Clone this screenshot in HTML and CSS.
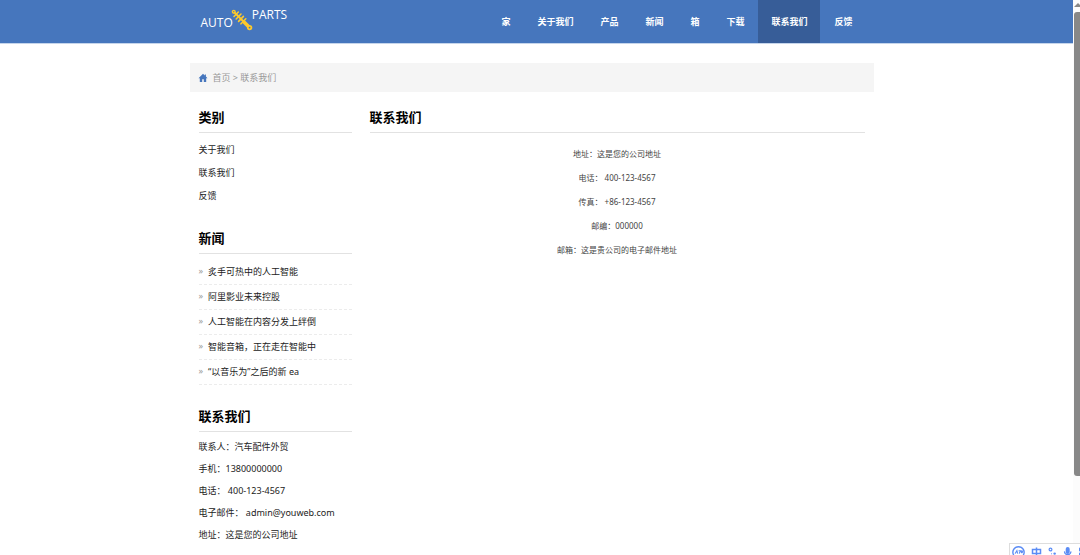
FILE: index.html
```
<!DOCTYPE html>
<html lang="zh-CN">
<head>
<meta charset="utf-8">
<meta name="viewport" content="width=device-width, initial-scale=1">
<title>联系我们</title>
<link rel="stylesheet" href="styles.css">
</head>
<body>
<div class="shell">
  <div class="page">
    <header class="header">
      <div class="container header-inner">
        <a class="logo" href="#" aria-label="AUTO PARTS">
          <span class="logo-auto">AUTO</span>
          <svg class="logo-mark" viewBox="0 0 22 22" width="22" height="22" fill="none" stroke="#fdc92b" stroke-linecap="round">
            <path d="M3.5 3.5L14 14" stroke-width="1.8"/>
            <path d="M13 13L17.5 17.5" stroke-width="3.6"/>
            <path d="M3 7.5L7.3 3M5.2 10L10 5M7.6 12.4L12.4 7.4M10 14.8L14.8 9.8" stroke-width="1.6"/>
            <circle cx="2.8" cy="2.8" r="1.4" stroke-width="1.3"/>
            <circle cx="18.6" cy="18.6" r="1.8" stroke-width="1.8" fill="#4676bd"/>
          </svg>
          <span class="logo-parts">PARTS</span>
        </a>
        <nav class="nav">
          <a href="#">家</a>
          <a href="#">关于我们</a>
          <a href="#">产品</a>
          <a href="#">新闻</a>
          <a href="#">箱</a>
          <a href="#">下载</a>
          <a class="active" href="#" aria-current="page">联系我们</a>
          <a href="#">反馈</a>
        </nav>
      </div>
    </header>

    <div class="body">
      <div class="container">
        <nav class="breadcrumb">
          <svg class="home" viewBox="0 0 10 10" width="10" height="10" fill="#4676bd"><path d="M5 .8L.5 5.2h1.3V9h2.4V6.3h1.6V9h2.4V5.2h1.3L7.9 3.6V1.4H6.8v1.1z"/></svg>
          <span><a href="#">首页</a> &gt; <a href="#">联系我们</a></span>
        </nav>

        <div class="columns">
          <aside class="sidebar">
            <section class="block">
              <h2>类别</h2>
              <ul class="categories">
                <li><a href="#">关于我们</a></li>
                <li><a href="#">联系我们</a></li>
                <li><a href="#">反馈</a></li>
              </ul>
            </section>
            <section class="block">
              <h2>新闻</h2>
              <ul class="news">
                <li><a href="#">炙手可热中的人工智能</a></li>
                <li><a href="#">阿里影业未来控股</a></li>
                <li><a href="#">人工智能在内容分发上绊倒</a></li>
                <li><a href="#">智能音箱，正在走在智能中</a></li>
                <li><a href="#">“以音乐为”之后的新 ea</a></li>
              </ul>
            </section>
            <section class="block">
              <h2>联系我们</h2>
              <div class="contact">
                <p>联系人：汽车配件外贸</p>
                <p>手机：13800000000</p>
                <p>电话： 400-123-4567</p>
                <p>电子邮件： admin@youweb.com</p>
                <p>地址：这是您的公司地址</p>
              </div>
            </section>
          </aside>

          <main class="content">
            <h2>联系我们</h2>
            <div class="details">
              <p>地址：这是您的公司地址</p>
              <p>电话： 400-123-4567</p>
              <p>传真： +86-123-4567</p>
              <p>邮编：000000</p>
              <p>邮箱：这是贵公司的电子邮件地址</p>
            </div>
          </main>
        </div>
      </div>
    </div>
  </div>

  <div class="scrollbar" aria-hidden="true">
    <svg viewBox="0 0 6 4" width="6" height="4"><path d="M0 4L4 0l2 2v2z" fill="#888"/></svg>
    <div class="thumb"></div>
  </div>
</div>

<div class="ime">
  <svg viewBox="0 0 70 11" width="70" height="11" fill="none" stroke="#5b8cf5" stroke-linecap="round">
    <path d="M3.6 11A5.6 5.6 0 1 1 13.4 11" stroke-width="1.4"/>
    <path d="M5.3 9.2l1.6-2.6.6 2.6M9 6.8h1.5L9.3 9.2M11.4 6.8v1.6q.8 1.2 1.4-1.6" stroke-width="1.1"/>
    <path d="M22.5 5.5h8v4h-8zM26.5 3.5v8" stroke-width="1.5" stroke-linecap="butt"/>
    <circle cx="40.5" cy="5.5" r="1.4" stroke-width="1.2"/>
    <path d="M44.6 9.6h.1" stroke-width="2.4"/>
    <path d="M41.5 9.8h.1" stroke-width="1"/>
    <path d="M57.7 5v3" stroke-width="4"/>
    <path d="M54.5 8q.3 2.6 3.2 2.6 2.9 0 3.2-2.6" stroke-width="1.3"/>
    <path d="M70 4.5v2M70 9.5v2" stroke-width="2"/>
  </svg>
</div>
</body>
</html>
```

FILE: styles.css
```
* {
  box-sizing: border-box;
}

body,
h2,
p,
ul {
  margin: 0;
  padding: 0;
}

body {
  background: #fff;
  color: #222;
  font-family: "Noto Sans", "Noto Sans CJK SC", sans-serif;
  font-size: 9px;
  overflow: hidden;
}

a {
  color: inherit;
  text-decoration: none;
}

ul {
  list-style: none;
}

.shell {
  display: flex;
  height: 100vh;
}

.page {
  flex: 1;
  min-width: 0;
  overflow: hidden;
}

.header,
.body {
  padding-right: 10px;
}

.container {
  max-width: 684px;
  margin: 0 auto;
}

.header {
  background: #4676bd;
  border-bottom: 1px solid #c5d5eb;
}

.header-inner {
  display: flex;
  justify-content: space-between;
  padding: 0 8px 0 11px;
}

.logo {
  display: flex;
  align-items: center;
  color: #fff;
  font-family: "Open Sans", sans-serif;
  font-size: 12px;
  line-height: 14px;
}

.logo-auto {
  padding-top: 3px;
}

.logo-mark {
  margin: 0 0 4px -2px;
}

.logo-parts {
  margin-left: -1px;
  padding-bottom: 13px;
}

.nav {
  display: flex;
  gap: 1px;
}

.nav a {
  padding: 0 13px;
  color: #fff;
  font-weight: 700;
  line-height: 43px;
}

.nav .active {
  background: #375d98;
}

.breadcrumb {
  display: flex;
  align-items: center;
  gap: 5px;
  margin-top: 19px;
  padding: 0 8px;
  background: #f5f5f5;
  color: #999;
  line-height: 29px;
}

.columns {
  display: flex;
  gap: 18px;
  padding: 12px 9px 0;
}

.sidebar {
  flex: 0 0 153px;
}

.content {
  flex: 1;
}

h2 {
  padding-bottom: 2px;
  border-bottom: 1px solid #e2e2e2;
  color: #000;
  font-size: 13px;
  line-height: 26px;
}

.block {
  margin-bottom: 18px;
}

.categories {
  padding-top: 5px;
  line-height: 23px;
}

.news {
  padding-top: 6px;
}

.news li {
  display: flex;
  gap: 5px;
  border-bottom: 1px dashed #ececec;
  line-height: 24px;
}

.news li::before {
  content: "»";
  color: #999;
  line-height: 22px;
}

.contact {
  padding-top: 4px;
  line-height: 22px;
}

.details {
  padding-top: 9px;
  color: #444;
  font-size: 8px;
  line-height: 24px;
  text-align: center;
}

.scrollbar {
  display: flex;
  flex: 0 0 6px;
  flex-direction: column;
  gap: 5px;
  padding: 3px 0 0 1px;
  background: #fcfcfc;
}

.thumb {
  height: 84%;
  border-radius: 3px 0 0 3px;
  background: #888;
}

.ime {
  position: fixed;
  right: 0;
  bottom: 0;
  display: flex;
  border: 1px solid #ddd;
  border-width: 1px 0 0 1px;
  background: #fff;
}
```
